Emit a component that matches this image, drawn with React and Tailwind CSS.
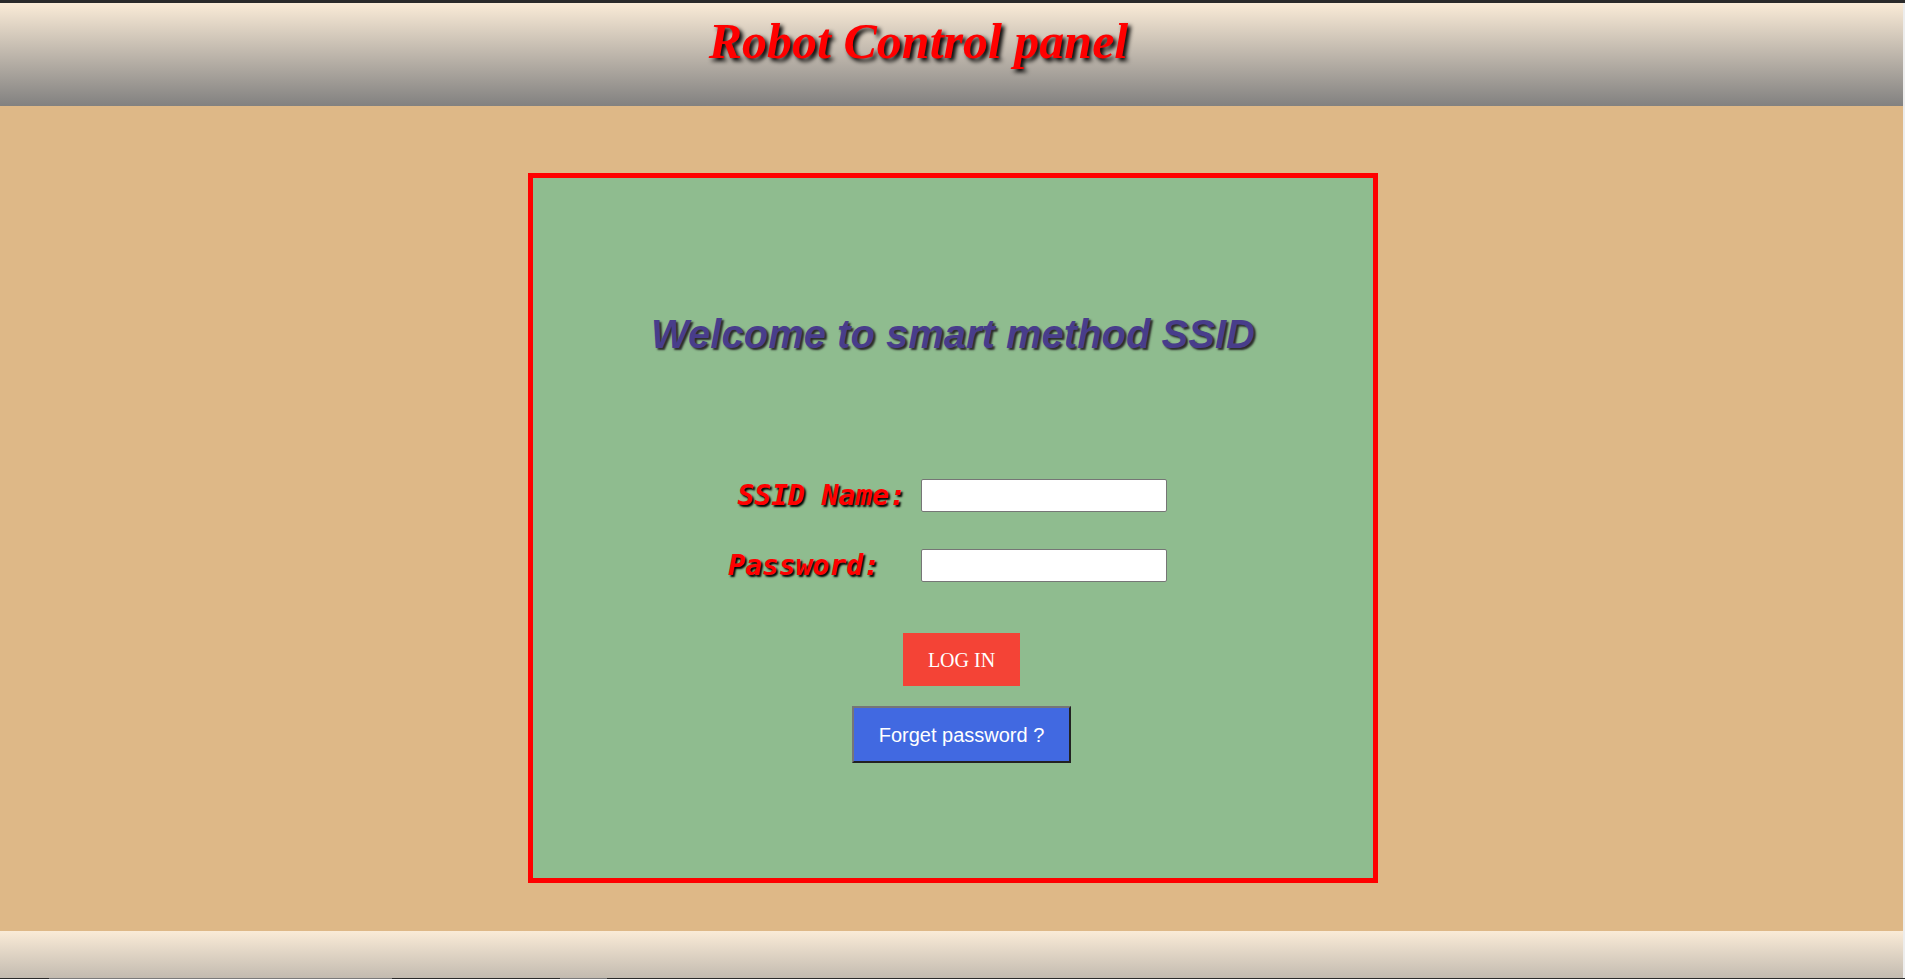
export default function App() {
  return (
    <div className="w-[1905px] h-[979px] overflow-hidden flex flex-col bg-[#deb887]">
      <div className="h-[3px] bg-[#2a2a2a] shrink-0" />
      <div className="flex flex-1 min-h-0">
        <div className="flex-1 flex flex-col min-w-0">
          <header className="h-[103px] shrink-0 bg-[linear-gradient(to_bottom,#faebd7,#828180)] flex justify-center pr-[66px]">
            <h1 className="pt-[9px] text-[50px] leading-[58px] font-bold italic text-[#ff0000] [font-family:'Liberation_Serif','Times_New_Roman',serif] [text-shadow:3px_3px_4px_#000]">
              Robot Control panel
            </h1>
          </header>
          <main className="flex-1 flex justify-center pl-[3px] pt-[67px]">
            <div className="w-[850px] h-[710px] border-[5px] border-[#ff0000] bg-[#8fbc8f] flex flex-col pt-[133px]">
              <h2 className="text-center text-[40px] leading-[46px] font-bold italic text-[#483d8b] [font-family:'Liberation_Sans',Arial,sans-serif] [text-shadow:2px_2px_2px_#2a2a2a]">
                Welcome to smart method SSID
              </h2>
              <div className="mt-[122px] flex flex-col gap-[37px]">
                <div className="flex items-center h-[33px]">
                  <div className="w-[388px] flex justify-end">
                    <label className="mr-[15px] text-[28px] font-bold italic text-[#ff0000] whitespace-pre [font-family:'DejaVu_Sans_Mono',monospace] [text-shadow:2px_2px_2px_#000]">
                      SSID Name:
                    </label>
                  </div>
                  <input type="text" className="w-[246px] h-[33px] bg-white border border-[#767676] rounded-[2px] outline-none" />
                </div>
                <div className="flex items-center h-[33px]">
                  <div className="w-[388px] flex justify-end">
                    <label className="mr-[41px] text-[28px] font-bold italic text-[#ff0000] whitespace-pre [font-family:'DejaVu_Sans_Mono',monospace] [text-shadow:2px_2px_2px_#000]">
                      Password:
                    </label>
                  </div>
                  <input type="password" className="w-[246px] h-[33px] bg-white border border-[#767676] rounded-[2px] outline-none" />
                </div>
              </div>
              <div className="mt-[51px] flex flex-col items-center pl-[17px] gap-[20px]">
                <button className="w-[117px] h-[53px] bg-[#f44336] text-white text-[20px] [font-family:'Liberation_Serif','Times_New_Roman',serif]">
                  LOG IN
                </button>
                <button className="w-[219px] h-[57px] bg-[#4169e1] text-white text-[20px] border-2 border-t-[#767676] border-l-[#767676] border-b-[#222] border-r-[#222] [font-family:'Liberation_Sans',Arial,sans-serif]">
                  Forget password ?
                </button>
              </div>
            </div>
          </main>
          <footer className="h-[47px] shrink-0 bg-[linear-gradient(to_bottom,#faebd7,#c3bbb0)]" />
        </div>
        <div className="w-[2px] bg-[#ededed] shrink-0" />
      </div>
      <div className="h-[1px] bg-[#2a2a2a] shrink-0 flex">
        <div className="ml-[49px] w-[343px] bg-[#7a7a7a]" />
        <div className="ml-[168px] w-[47px] bg-[#7a7a7a]" />
      </div>
    </div>
  );
}
